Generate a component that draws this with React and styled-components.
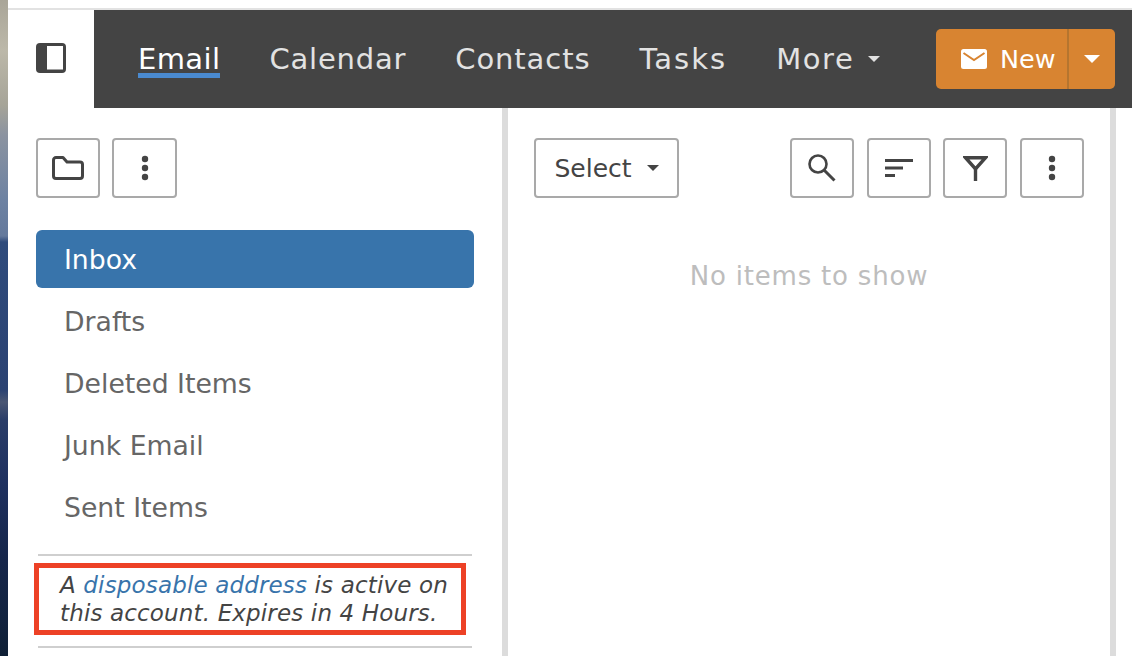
import React from "react";
import styled, { createGlobalStyle } from "styled-components";

const GlobalStyle = createGlobalStyle`
  html, body {
    margin: 0;
    padding: 0;
    background: #fff;
  }
  body {
    font-family: "DejaVu Sans", "Liberation Sans", sans-serif;
    overflow: hidden;
  }
`;

const Page = styled.div`
  display: flex;
  width: 1132px;
  height: 656px;
  overflow: hidden;
`;

const Wallpaper = styled.div`
  flex: 0 0 8px;
  background: linear-gradient(
    180deg,
    #a9a598 0,
    #bcb8a9 50px,
    #a6a498 105px,
    #8b93a0 135px,
    #6d82a2 200px,
    #64799c 236px,
    #2f4b7c 242px,
    #2b4272 390px,
    #4a5673 402px,
    #2a3d68 420px,
    #1f3160 480px,
    #16264a 560px,
    #12233f 620px,
    #0f1f35 656px
  );
`;

const Main = styled.div`
  flex: 1;
  display: flex;
  flex-direction: column;
  min-width: 0;
`;

const TopEdge = styled.div`
  height: 8px;
  border-bottom: 2px solid #e2e2e2;
`;

const Header = styled.header`
  display: flex;
  height: 98px;
`;

const Brand = styled.div`
  flex: 0 0 86px;
  display: flex;
  align-items: center;
  justify-content: center;
  padding-bottom: 2px;
  box-sizing: border-box;
`;

const NavBar = styled.nav`
  flex: 1;
  display: flex;
  align-items: center;
  background: #444444;
  padding: 0 17px 0 44px;
`;

const NavLink = styled.a`
  font-size: 29px;
  line-height: 36px;
  letter-spacing: ${(p) => p.$spacing ?? 0.8}px;
  margin-right: 49px;
  color: ${(p) => (p.$active ? "#fff" : "#e2e2e2")};
  box-shadow: ${(p) =>
    p.$active ? "inset 0 -4px 0 #4a8ad0, 0 1px 0 #4a8ad0" : "none"};
  display: inline-flex;
  align-items: center;
  white-space: nowrap;
`;

const Caret = styled.span`
  display: inline-block;
  width: 0;
  height: 0;
  margin-left: ${(p) => p.$gap ?? 14}px;
  border-left: ${(p) => p.$size ?? 6}px solid transparent;
  border-right: ${(p) => p.$size ?? 6}px solid transparent;
  border-top: ${(p) => p.$size ?? 6}px solid ${(p) => p.$color ?? "#e2e2e2"};
`;

const NewButton = styled.div`
  margin-left: auto;
  display: flex;
  height: 60px;
  width: 179px;
  background: #d88431;
  border-radius: 5px;
  color: #fff;
`;

const NewLabel = styled.div`
  flex: 1;
  display: flex;
  align-items: center;
  gap: 13px;
  padding-left: 25px;
  font-size: 25.5px;
  border-right: 2px solid #b5752f;
`;

const NewCaret = styled.div`
  flex: 0 0 46px;
  display: flex;
  align-items: center;
  justify-content: center;
`;

const Body = styled.div`
  flex: 1;
  display: flex;
  min-height: 0;
`;

const Sidebar = styled.aside`
  flex: 0 0 500px;
  box-sizing: border-box;
  padding: 30px 28px 0 28px;
  border-right: 6px solid #dcdcdc;
`;

const ToolRow = styled.div`
  display: flex;
  gap: ${(p) => p.$gap ?? 12}px;
  align-items: center;
`;

const ToolButton = styled.button`
  box-sizing: border-box;
  width: ${(p) => p.$w ?? 64}px;
  height: 60px;
  padding: 0;
  display: flex;
  align-items: center;
  justify-content: center;
  background: #fff;
  border: 2px solid #a9a9a9;
  border-radius: 4px;
  color: #444;
`;

const FolderList = styled.ul`
  list-style: none;
  margin: 32px 0 18px;
  padding: 0;
`;

const FolderItem = styled.li`
  box-sizing: border-box;
  height: 58px;
  margin-bottom: 4px;
  padding-left: 28px;
  display: flex;
  align-items: center;
  font-size: 26.7px;
  border-radius: 6px;
  color: ${(p) => (p.$active ? "#fff" : "#666")};
  background: ${(p) => (p.$active ? "#3874ab" : "transparent")};
`;

const Rule = styled.hr`
  margin: 0 2px;
  border: 0;
  height: 2px;
  background: #cfcfcf;
`;

const Notice = styled.div`
  box-sizing: border-box;
  width: 432px;
  height: 72px;
  margin: 7px 0 11px -2px;
  padding: 3px 0 0 21px;
  border: 5px solid #ed4126;
  font-style: italic;
  font-size: 23px;
  line-height: 28px;
  letter-spacing: 0.15px;
  color: #444;
  white-space: nowrap;
  & a {
    color: #3874ab;
  }
`;

const ListPane = styled.section`
  flex: 0 0 608px;
  box-sizing: border-box;
  padding: 30px 26px 0 26px;
  border-right: 6px solid #dcdcdc;
`;

const ListTools = styled.div`
  display: flex;
  justify-content: space-between;
`;

const SelectButton = styled(ToolButton)`
  width: 145px;
  font-family: inherit;
  font-size: 25px;
  color: #444;
`;

const Empty = styled.div`
  margin-top: 63px;
  text-align: center;
  font-size: 26px;
  letter-spacing: 0.8px;
  color: #bdbdbd;
`;

const PanelIcon = () => (
  <svg width="30" height="30" viewBox="0 0 30 30">
    <rect x="0" y="0" width="30" height="30" rx="4" fill="#444" />
    <rect x="11" y="3" width="16" height="23.5" fill="#fff" />
  </svg>
);

const FolderIcon = () => (
  <svg width="32" height="24" viewBox="0 0 32 24" fill="none" stroke="#444" strokeWidth="3" strokeLinejoin="round">
    <path d="M1.5 4 a2.5 2.5 0 0 1 2.5 -2.5 H11 L15 6 H28 a2.5 2.5 0 0 1 2.5 2.5 V20 a2.5 2.5 0 0 1 -2.5 2.5 H4 a2.5 2.5 0 0 1 -2.5 -2.5 Z" />
  </svg>
);

const Dots = () => (
  <svg width="8" height="26" viewBox="0 0 8 26" fill="#444">
    <circle cx="4" cy="4" r="3.2" />
    <circle cx="4" cy="13" r="3.2" />
    <circle cx="4" cy="22" r="3.2" />
  </svg>
);

const SearchIcon = () => (
  <svg width="28" height="28" viewBox="0 0 28 28" fill="none" stroke="#444">
    <circle cx="10" cy="10" r="8.5" strokeWidth="2.6" />
    <path d="M16 16 L26.5 26.5" strokeWidth="3" />
  </svg>
);

const SortIcon = () => (
  <svg width="28" height="18" viewBox="0 0 28 18" fill="#444">
    <rect x="0" y="0" width="28" height="3" />
    <rect x="0" y="7.5" width="18" height="3" />
    <rect x="0" y="15" width="10" height="3" />
  </svg>
);

const FunnelIcon = () => (
  <svg width="25" height="25" viewBox="0 0 25 25" fill="none" stroke="#444" strokeWidth="3.4">
    <path d="M2.5 1.7 H22.5 L12.5 13 Z" strokeLinejoin="miter" />
    <path d="M12.5 12 V25" />
  </svg>
);

const MailGlyph = () => (
  <svg width="26" height="20" viewBox="0 0 26 20">
    <rect width="26" height="20" rx="2.5" fill="#fff" />
    <path d="M2.5 4 L13 11 L23.5 4" fill="none" stroke="#d88431" strokeWidth="2" />
  </svg>
);

const folders = ["Inbox", "Drafts", "Deleted Items", "Junk Email", "Sent Items"];

export default function App() {
  return (
    <Page>
      <GlobalStyle />
      <Wallpaper />
      <Main>
        <TopEdge />
        <Header>
          <Brand>
            <PanelIcon />
          </Brand>
          <NavBar>
            <NavLink $active $spacing={0.4}>Email</NavLink>
            <NavLink>Calendar</NavLink>
            <NavLink $spacing={0.9}>Contacts</NavLink>
            <NavLink $spacing={2}>Tasks</NavLink>
            <NavLink $spacing={1.6}>
              More
              <Caret />
            </NavLink>
            <NewButton>
              <NewLabel>
                <MailGlyph />
                New
              </NewLabel>
              <NewCaret>
                <Caret $gap={0} $size={8} $color="#fff" />
              </NewCaret>
            </NewButton>
          </NavBar>
        </Header>
        <Body>
          <Sidebar>
            <ToolRow>
              <ToolButton>
                <FolderIcon />
              </ToolButton>
              <ToolButton $w={65}>
                <Dots />
              </ToolButton>
            </ToolRow>
            <FolderList>
              {folders.map((name, i) => (
                <FolderItem key={name} $active={i === 0}>
                  {name}
                </FolderItem>
              ))}
            </FolderList>
            <Rule />
            <Notice>
              A <a>disposable address</a> is active on
              <br />
              this account. Expires in 4 Hours.
            </Notice>
            <Rule />
          </Sidebar>
          <ListPane>
            <ListTools>
              <SelectButton>
                Select
                <Caret $gap={15} $color="#444" />
              </SelectButton>
              <ToolRow $gap={12.67}>
                <ToolButton>
                  <SearchIcon />
                </ToolButton>
                <ToolButton>
                  <SortIcon />
                </ToolButton>
                <ToolButton>
                  <FunnelIcon />
                </ToolButton>
                <ToolButton>
                  <Dots />
                </ToolButton>
              </ToolRow>
            </ListTools>
            <Empty>No items to show</Empty>
          </ListPane>
        </Body>
      </Main>
    </Page>
  );
}
